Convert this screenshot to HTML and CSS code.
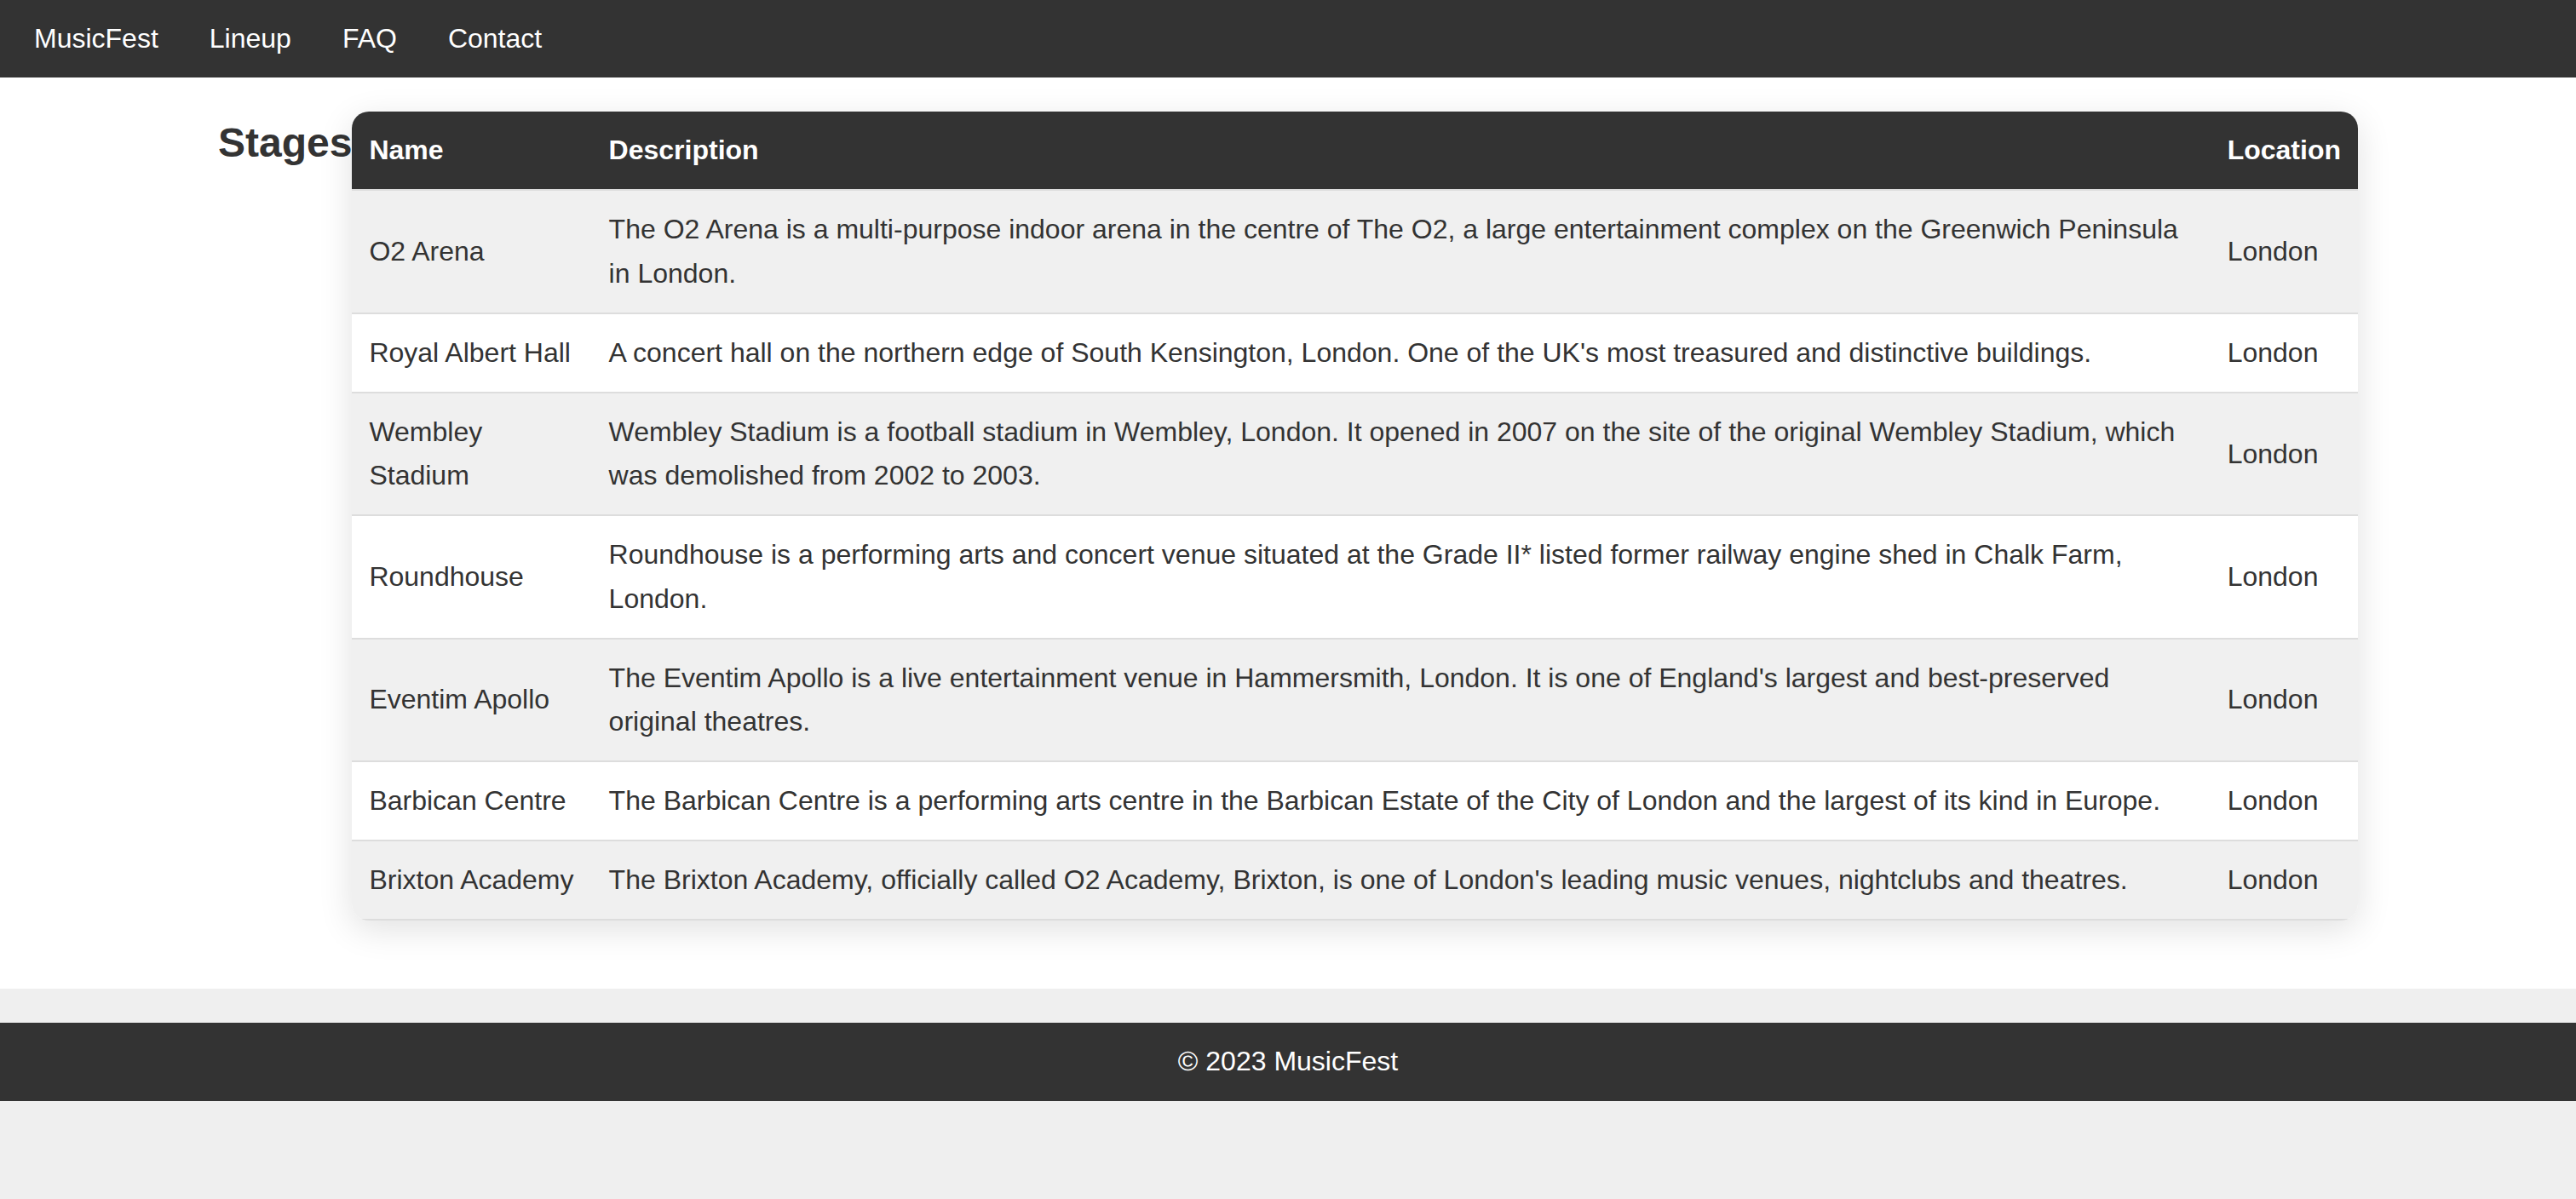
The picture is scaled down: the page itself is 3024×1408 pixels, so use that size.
FILE: index.html
```html
<!DOCTYPE html>
<html lang="en">
<head>
<meta charset="utf-8">
<title>MusicFest - Stages</title>
<link rel="stylesheet" href="styles.css">
</head>
<body>
<nav class="nav">
  <a class="nav-link" href="#">MusicFest</a>
  <a class="nav-link" href="#">Lineup</a>
  <a class="nav-link" href="#">FAQ</a>
  <a class="nav-link" href="#">Contact</a>
</nav>
<main class="main">
  <section class="stages">
    <h2 class="stages-title">Stages</h2>
    <div class="table-wrap">
      <table class="stages-table">
        <thead>
          <tr><th>Name</th><th>Description</th><th>Location</th></tr>
        </thead>
        <tbody>
          <tr><td>O2 Arena</td><td>The O2 Arena is a multi-purpose indoor arena in the centre of The O2, a large entertainment complex on the Greenwich Peninsula in London.</td><td>London</td></tr>
          <tr><td>Royal Albert Hall</td><td>A concert hall on the northern edge of South Kensington, London. One of the UK's most treasured and distinctive buildings.</td><td>London</td></tr>
          <tr><td>Wembley Stadium</td><td>Wembley Stadium is a football stadium in Wembley, London. It opened in 2007 on the site of the original Wembley Stadium, which was demolished from 2002 to 2003.</td><td>London</td></tr>
          <tr><td>Roundhouse</td><td>Roundhouse is a performing arts and concert venue situated at the Grade II* listed former railway engine shed in Chalk Farm, London.</td><td>London</td></tr>
          <tr><td>Eventim Apollo</td><td>The Eventim Apollo is a live entertainment venue in Hammersmith, London. It is one of England's largest and best-preserved original theatres.</td><td>London</td></tr>
          <tr><td>Barbican Centre</td><td>The Barbican Centre is a performing arts centre in the Barbican Estate of the City of London and the largest of its kind in Europe.</td><td>London</td></tr>
          <tr><td>Brixton Academy</td><td>The Brixton Academy, officially called O2 Academy, Brixton, is one of London's leading music venues, nightclubs and theatres.</td><td>London</td></tr>
        </tbody>
      </table>
    </div>
  </section>
</main>
<footer class="footer">
  <p class="footer-text">&copy; 2023 MusicFest</p>
</footer>
</body>
</html>
```

FILE: styles.css
```css
* {
  box-sizing: border-box;
}

html, body {
  margin: 0;
  padding: 0;
}

body {
  font-family: "Liberation Sans", Arial, sans-serif;
  font-size: 32px;
  line-height: 1.6;
  color: #333;
  background: #efefef;
}

.nav {
  display: flex;
  gap: 60px;
  padding: 20px 40px;
  background: #333;
}

.nav-link {
  color: #fff;
  text-decoration: none;
}

.main {
  background: #fff;
  padding: 40px 256px 80px;
}

.stages {
  display: flex;
  align-items: flex-start;
}

.stages-title {
  margin: 0;
  font-size: 48px;
  line-height: 1.55;
  font-weight: bold;
  color: #333;
  white-space: nowrap;
}

.table-wrap {
  flex: 1;
  min-width: 0;
  border-radius: 20px;
  overflow: hidden;
  box-shadow: 0 10px 40px rgba(0, 0, 0, 0.12);
  background: #fff;
}

.stages-table {
  width: 100%;
  border-collapse: collapse;
}

.stages-table th,
.stages-table td {
  padding: 20px;
  text-align: left;
  border-bottom: 2px solid #ddd;
}

.stages-table th {
  background: #333;
  color: #fff;
  font-weight: bold;
}

.stages-table tbody tr:nth-child(odd) {
  background: #f0f0f0;
}

.stages-table tbody tr:nth-child(even) {
  background: #fff;
}

.footer {
  margin-top: 40px;
  padding: 20px;
  background: #333;
  color: #fff;
  text-align: center;
}

.footer-text {
  margin: 0;
}
```
